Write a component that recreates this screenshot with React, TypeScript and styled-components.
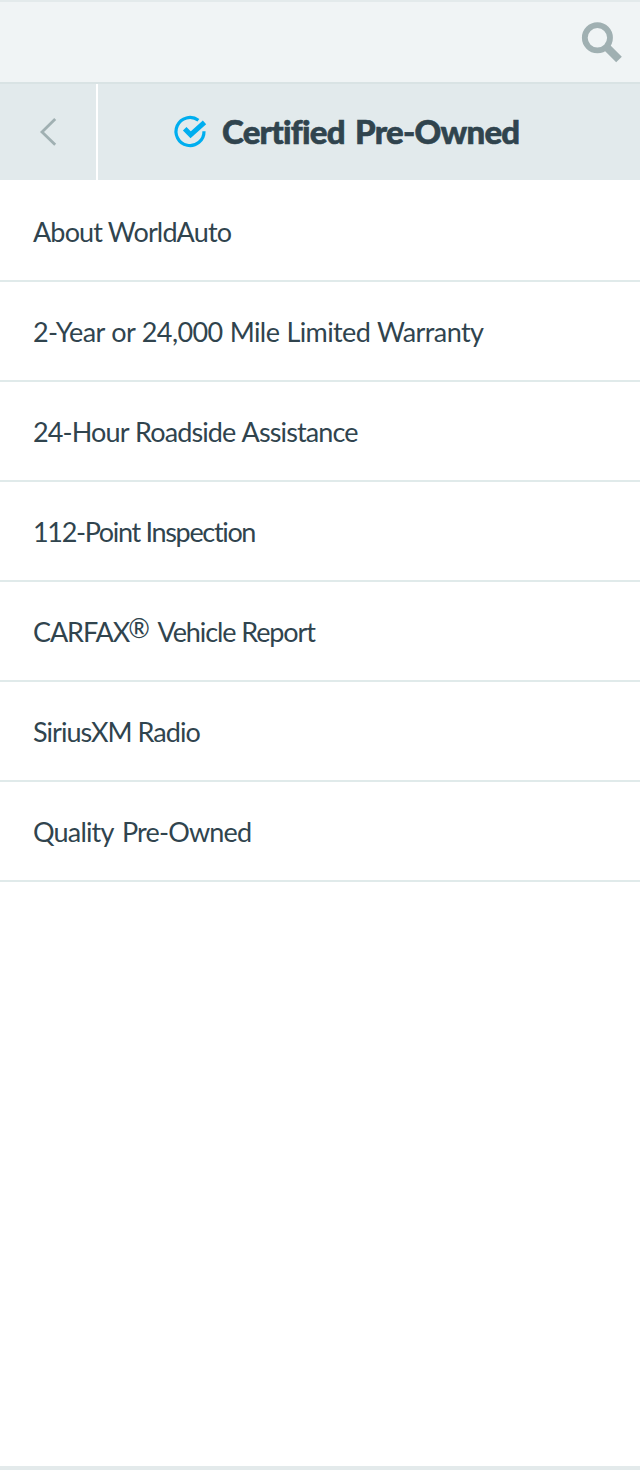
import React from "react";
import styled, { createGlobalStyle } from "styled-components";

const GlobalStyle = createGlobalStyle`
  * { box-sizing: border-box; }
  body { margin: 0; background: #fff; }
`;

const Screen = styled.div`
  display: flex;
  flex-direction: column;
  min-height: 1470px;
  border-top: 2px solid #e3eaeb;
  border-bottom: 4px solid #e3eaeb;
  background: #fff;
  color: #30444e;
  font-family: Lato, "Liberation Sans", sans-serif;
`;

const SearchBar = styled.div`
  display: flex;
  justify-content: flex-end;
  align-items: center;
  height: 82px;
  padding-right: 16px;
  background: #f0f4f5;
  border-bottom: 2px solid #d9e3e4;
`;

const IconButton = styled.button`
  display: flex;
  padding: 0;
  border: 0;
  background: none;
  cursor: pointer;
`;

const Header = styled.header`
  display: flex;
  height: 96px;
  background: #e2eaec;
`;

const BackButton = styled(IconButton)`
  width: 98px;
  align-items: center;
  justify-content: center;
  border-right: 2px solid #fff;
`;

const Heading = styled.div`
  display: flex;
  flex: 1;
  align-items: center;
  padding-left: 74px;
`;

const Title = styled.h1`
  margin: 0 0 2px 14px;
  font-size: 33px;
  line-height: 40px;
  font-weight: 900;
  letter-spacing: -0.75px;
  word-spacing: 3px;
  -webkit-text-stroke: 0.6px currentColor;
  white-space: nowrap;
`;

const Menu = styled.ul`
  margin: 0;
  padding: 2px 0 0;
  list-style: none;
`;

const MenuItem = styled.li<{ $tracking: number; $wordGap?: number }>`
  display: flex;
  align-items: center;
  height: 100px;
  padding: 2px 0 0 33px;
  border-bottom: 2px solid #e0eaea;
  font-size: 27px;
  line-height: 34px;
  letter-spacing: ${(p) => p.$tracking}px;
  word-spacing: ${(p) => p.$wordGap ?? 0}px;
  white-space: pre;
`;

const Registered = styled.span`
  margin: 0 4px 0 -1px;
  font-size: 26px;
  line-height: 1;
  vertical-align: 4px;
`;

const items = [
  { label: "About WorldAuto", tracking: -0.85 },
  { label: "2-Year or 24,000 Mile Limited Warranty", tracking: -0.6, wordGap: 0.8 },
  { label: "24-Hour Roadside Assistance", tracking: -0.88, wordGap: 1 },
  { label: "112-Point Inspection", tracking: -1.33 },
  {
    label: (
      <>
        CARFAX<Registered>®</Registered> Vehicle Report
      </>
    ),
    tracking: -1.1,
  },
  { label: "SiriusXM Radio", tracking: -0.95 },
  { label: "Quality Pre-Owned", tracking: -0.83, wordGap: 3 },
];

export default function App() {
  return (
    <>
      <GlobalStyle />
      <Screen>
        <SearchBar>
          <IconButton aria-label="Search">
            <svg width="44" height="44" viewBox="580 20 44 44" fill="none" stroke="#a0b0b2">
              <circle cx="597.4" cy="37.8" r="12.6" strokeWidth="5.8" />
              <path d="M606 46.5L619 59.5" strokeWidth="8" />
            </svg>
          </IconButton>
        </SearchBar>
        <Header>
          <BackButton aria-label="Back">
            <svg width="20" height="30" viewBox="38 117 20 30" fill="none" stroke="#a0b0b2">
              <path d="M55.2 119L42 131.9L55.2 144.8" strokeWidth="2.8" />
            </svg>
          </BackButton>
          <Heading>
            <svg width="36" height="36" viewBox="172 114 36 36" fill="none" stroke="#00aeef">
              <path d="M198.4 120.3A14 14 0 1 0 204 131.2" strokeWidth="3.2" />
              <path d="M184.7 128.8L190.6 134.8L204.5 122.3" strokeWidth="5" />
            </svg>
            <Title>Certified Pre-Owned</Title>
          </Heading>
        </Header>
        <Menu>
          {items.map((item, index) => (
            <MenuItem key={index} $tracking={item.tracking} $wordGap={item.wordGap}>
              <span>{item.label}</span>
            </MenuItem>
          ))}
        </Menu>
      </Screen>
    </>
  );
}
